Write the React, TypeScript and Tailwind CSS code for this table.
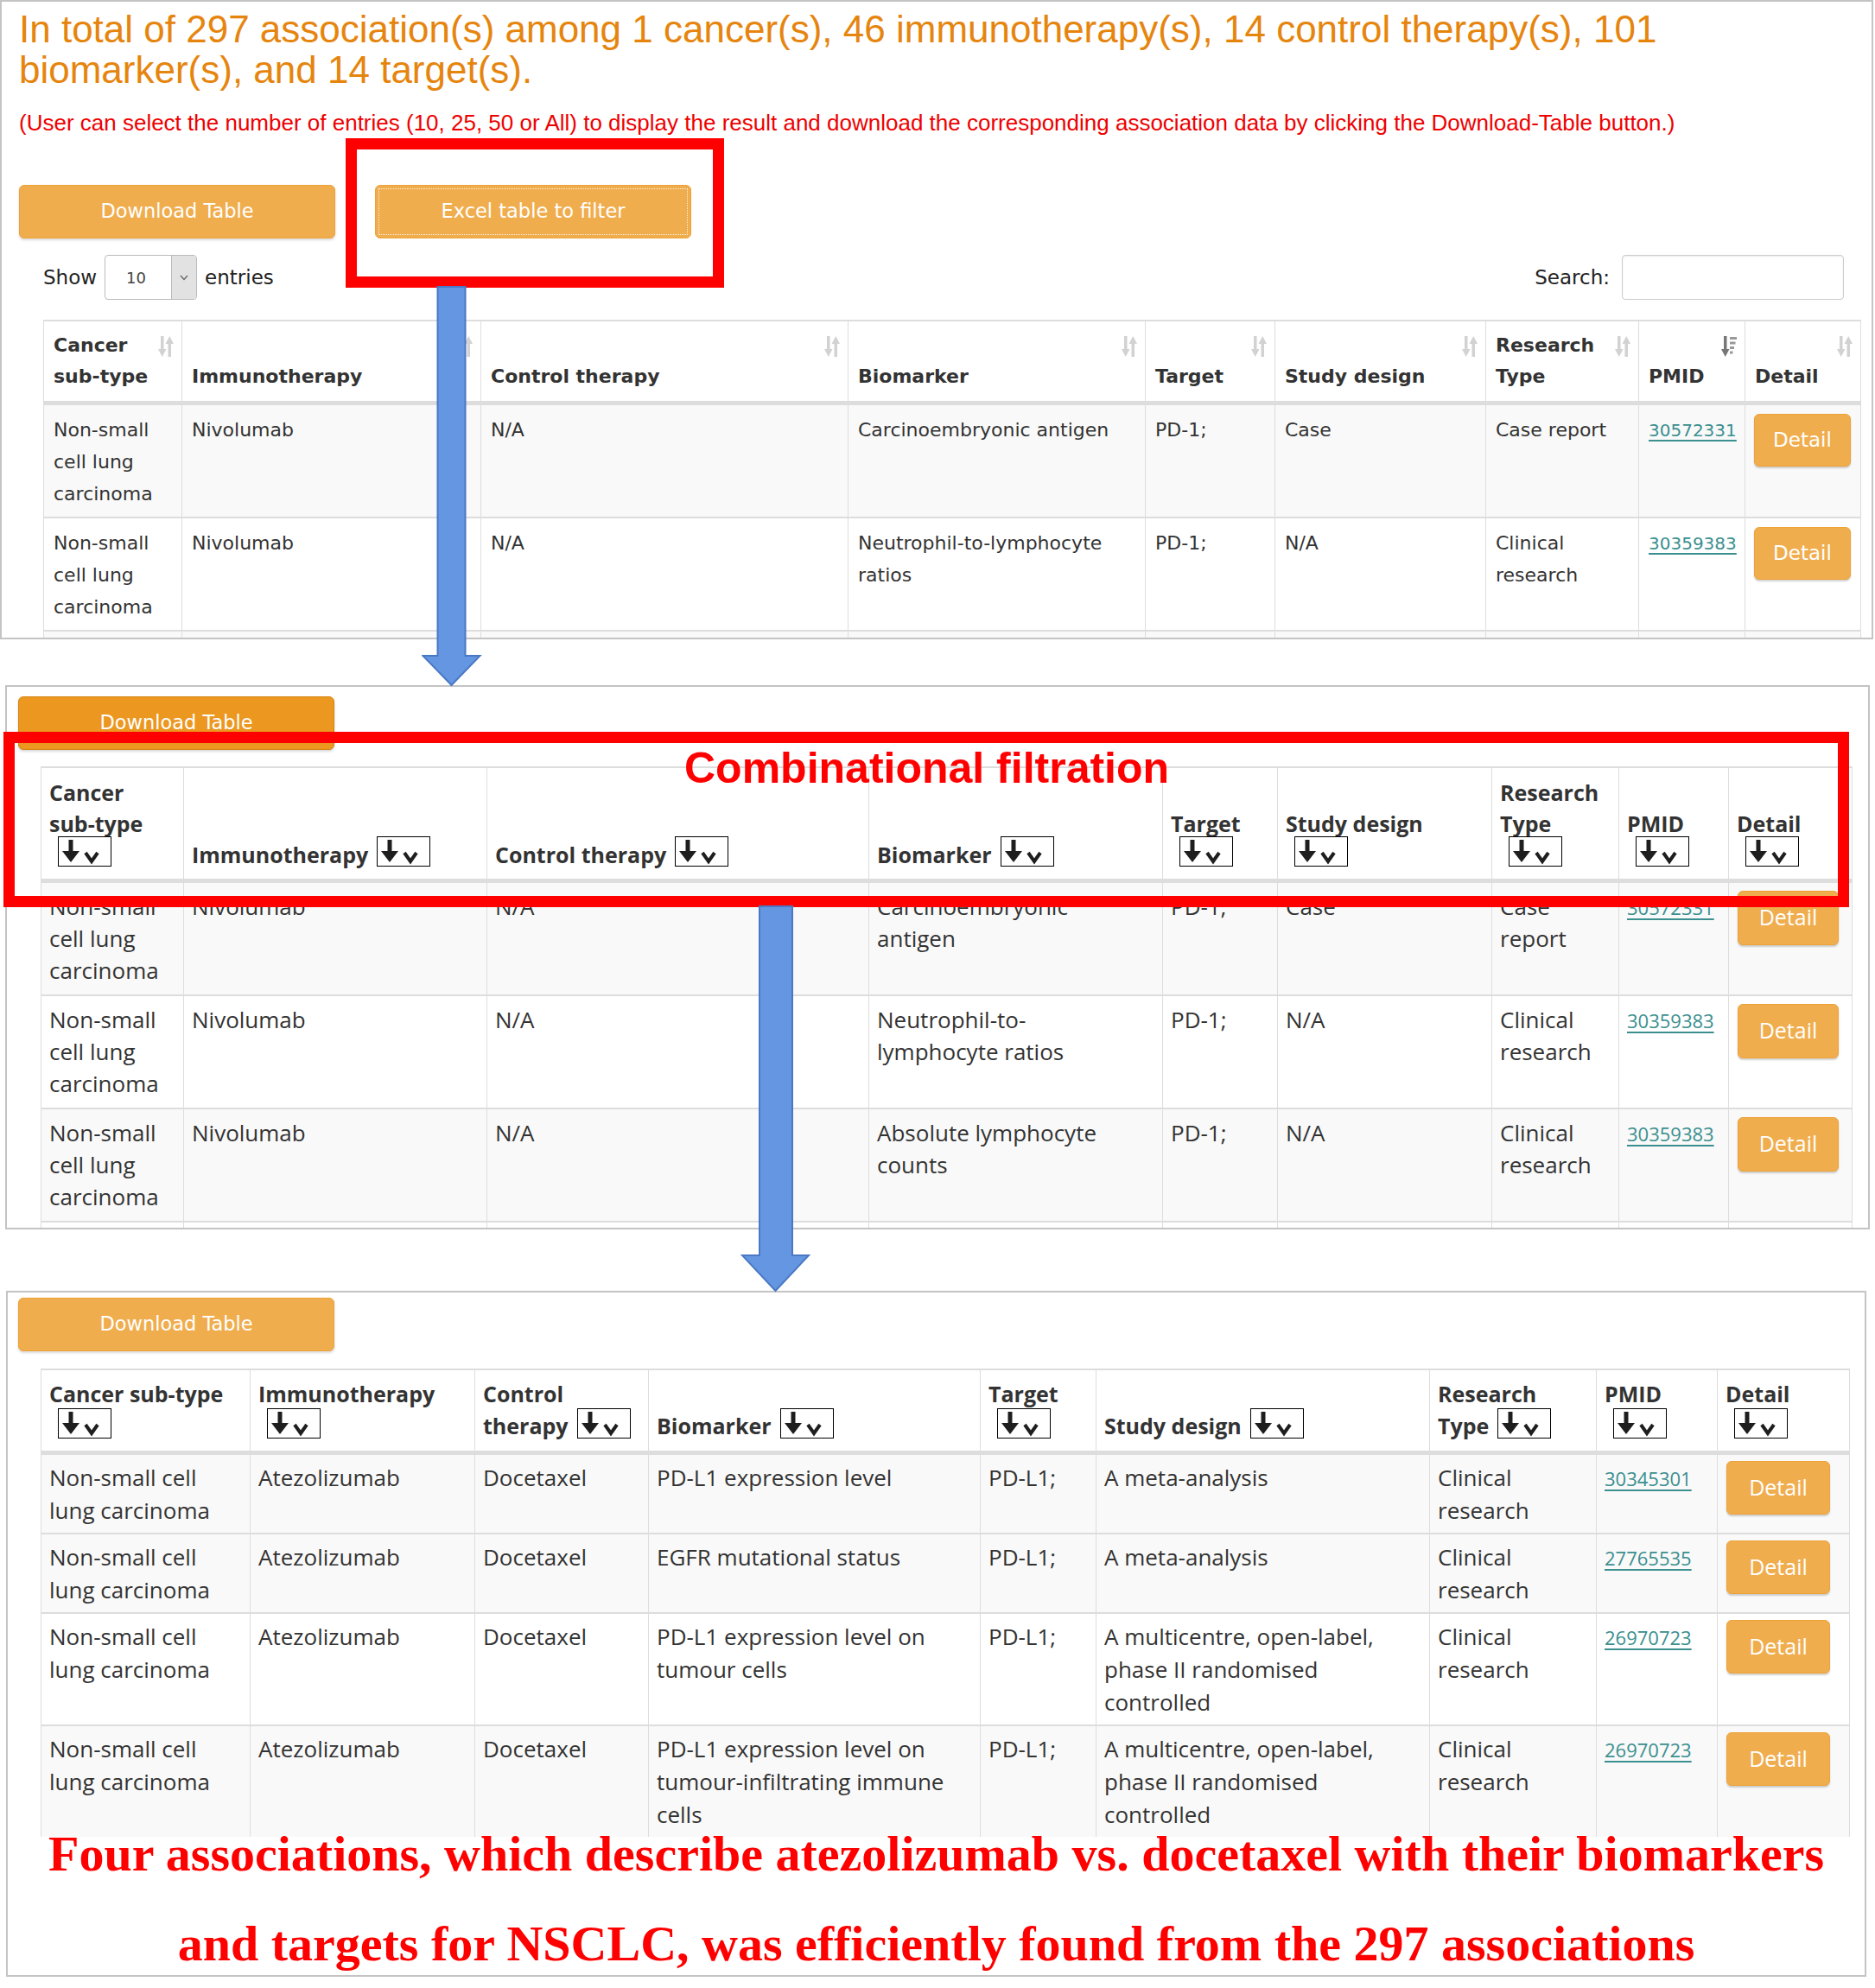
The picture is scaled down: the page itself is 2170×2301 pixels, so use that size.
import React from "react";

type Row = { cells: string[]; pmid: string; striped: boolean };
type HLine = [string, boolean];

const NSCLC3 = "Non-small\ncell lung\ncarcinoma";
const NSCLC2 = "Non-small cell\nlung carcinoma";

const rows1: Row[] = [
  { cells: [NSCLC3, "Nivolumab", "N/A", "Carcinoembryonic antigen", "PD-1;", "Case", "Case report"], pmid: "30572331", striped: true },
  { cells: [NSCLC3, "Nivolumab", "N/A", "Neutrophil-to-lymphocyte\nratios", "PD-1;", "N/A", "Clinical\nresearch"], pmid: "30359383", striped: false },
  { cells: [NSCLC3, "Nivolumab", "N/A", "Absolute lymphocyte counts", "PD-1;", "N/A", "Clinical\nresearch"], pmid: "30359383", striped: true },
];

const rows2: Row[] = [
  { cells: [NSCLC3, "Nivolumab", "N/A", "Carcinoembryonic\nantigen", "PD-1;", "Case", "Case\nreport"], pmid: "30572331", striped: true },
  { cells: [NSCLC3, "Nivolumab", "N/A", "Neutrophil-to-\nlymphocyte ratios", "PD-1;", "N/A", "Clinical\nresearch"], pmid: "30359383", striped: false },
  { cells: [NSCLC3, "Nivolumab", "N/A", "Absolute lymphocyte\ncounts", "PD-1;", "N/A", "Clinical\nresearch"], pmid: "30359383", striped: true },
  { cells: [NSCLC3, "Nivolumab", "N/A", "Interleukin-8", "PD-1;", "N/A", "Clinical\nresearch"], pmid: "30359383", striped: false },
];

const rows3: Row[] = [
  { cells: [NSCLC2, "Atezolizumab", "Docetaxel", "PD-L1 expression level", "PD-L1;", "A meta-analysis", "Clinical\nresearch"], pmid: "30345301", striped: true },
  { cells: [NSCLC2, "Atezolizumab", "Docetaxel", "EGFR mutational status", "PD-L1;", "A meta-analysis", "Clinical\nresearch"], pmid: "27765535", striped: true },
  { cells: [NSCLC2, "Atezolizumab", "Docetaxel", "PD-L1 expression level on\ntumour cells", "PD-L1;", "A multicentre, open-label,\nphase II randomised\ncontrolled", "Clinical\nresearch"], pmid: "26970723", striped: false },
  { cells: [NSCLC2, "Atezolizumab", "Docetaxel", "PD-L1 expression level on\ntumour-infiltrating immune\ncells", "PD-L1;", "A multicentre, open-label,\nphase II randomised\ncontrolled", "Clinical\nresearch"], pmid: "26970723", striped: true },
];

const heads1 = ["Cancer\nsub-type", "Immunotherapy", "Control therapy", "Biomarker", "Target", "Study design", "Research\nType", "PMID", "Detail"];

const heads2: HLine[][] = [
  [["Cancer", false], ["sub-type", false], ["", true]],
  [["Immunotherapy", true]],
  [["Control therapy", true]],
  [["Biomarker", true]],
  [["Target", false], ["", true]],
  [["Study design", false], ["", true]],
  [["Research", false], ["Type", false], ["", true]],
  [["PMID", false], ["", true]],
  [["Detail", false], ["", true]],
];

const heads3: HLine[][] = [
  [["Cancer sub-type", false], ["", true]],
  [["Immunotherapy", false], ["", true]],
  [["Control", false], ["therapy", true]],
  [["Biomarker", true]],
  [["Target", false], ["", true]],
  [["Study design", true]],
  [["Research", false], ["Type", true]],
  [["PMID", false], ["", true]],
  [["Detail", false], ["", true]],
];

const cols1 = ["w-[160px]", "w-[346px]", "w-[425px]", "w-[344px]", "w-[150px]", "w-[244px]", "w-[177px]", "w-[123px]", "w-[134px]"];
const cols2 = ["w-[165px]", "w-[351px]", "w-[442px]", "w-[340px]", "w-[133px]", "w-[248px]", "w-[147px]", "w-[127px]", "w-[143px]"];
const cols3 = ["w-[242px]", "w-[260px]", "w-[201px]", "w-[384px]", "w-[134px]", "w-[386px]", "w-[193px]", "w-[140px]", "w-[153px]"];

const SortIcon = ({ active }: { active?: boolean }) =>
  active ? (
    <svg width="18" height="26" viewBox="0 0 18 26">
      <rect x="3" y="1" width="3.5" height="17" fill="#777" />
      <polygon points="0,16 9.5,16 4.75,25" fill="#777" />
      <rect x="10" y="2" width="8" height="3" fill="#999" />
      <rect x="10" y="7.5" width="6.5" height="3" fill="#999" />
      <rect x="10" y="13" width="5" height="3" fill="#999" />
      <rect x="10" y="18.5" width="3.5" height="3" fill="#999" />
    </svg>
  ) : (
    <svg width="18" height="26" viewBox="0 0 18 26">
      <rect x="3" y="1" width="3.5" height="17" fill="#d2d2d2" />
      <polygon points="0,16 9.5,16 4.75,25" fill="#d2d2d2" />
      <rect x="11.5" y="8" width="3.5" height="17" fill="#d2d2d2" />
      <polygon points="8.5,10 18,10 13.25,1" fill="#d2d2d2" />
    </svg>
  );

const FilterBox = () => (
  <span className="inline-flex h-[35px] w-[62px] shrink-0 items-center justify-center border-[1.5px] border-black bg-white">
    <svg width="56" height="31" viewBox="0 0 56 31">
      <rect x="9.5" y="2" width="5" height="16" fill="#1e1e1e" />
      <polygon points="2,15 22,15 12,28" fill="#1e1e1e" />
      <polyline points="29,17 36,27 43,17" fill="none" stroke="#1e1e1e" strokeWidth="4" />
    </svg>
  </span>
);

const DetailBtn = ({ cls }: { cls: string }) => (
  <div className={`flex items-center justify-center rounded-[6px] border border-[#eea236] bg-[#f0ad4e] text-white shadow-[0_2px_2px_rgba(0,0,0,0.18)] ${cls}`}>
    Detail
  </div>
);

const Panel1Table = () => (
  <table className="w-[2103px] table-fixed border-collapse font-['DejaVu_Sans',sans-serif] text-[22px] text-[#333]">
    <colgroup>
      {cols1.map((c, i) => (
        <col key={i} className={c} />
      ))}
    </colgroup>
    <thead>
      <tr>
        {heads1.map((h, i) => (
          <th
            key={i}
            className="relative h-[95px] whitespace-pre border border-t-2 border-b-[5px] border-[#ddd] pb-[10px] pl-[11px] pr-[28px] text-left align-bottom font-bold leading-[36px]"
          >
            {h}
            <span className="absolute right-[9px] top-[16px]">
              <SortIcon active={i === 7} />
            </span>
          </th>
        ))}
      </tr>
    </thead>
    <tbody>
      {rows1.map((r, ri) => (
        <tr key={ri} className={r.striped ? "bg-[#f9f9f9]" : "bg-white"}>
          {r.cells.map((c, ci) => (
            <td key={ci} className="whitespace-pre border-x border-t-2 border-[#ddd] px-[11px] pb-[8px] pt-[10px] align-top leading-[37px]">
              {c}
            </td>
          ))}
          <td className="border-x border-t-2 border-[#ddd] px-[11px] pt-[10px] align-top leading-[37px]">
            <span className="text-[20px] text-[#3b8f8f] underline underline-offset-[4px]">{r.pmid}</span>
          </td>
          <td className="border-x border-t-2 border-[#ddd] px-[10px] pt-[10px] align-top">
            <DetailBtn cls="h-[61px] w-[112px] text-[23px]" />
          </td>
        </tr>
      ))}
    </tbody>
  </table>
);

const FilterTable = ({
  cols,
  heads,
  rows,
  headH,
  lineH,
  lead,
  width,
  pad,
  btn,
}: {
  cols: string[];
  heads: HLine[][];
  rows: Row[];
  headH: string;
  lineH: string;
  lead: string;
  width: string;
  pad: string;
  btn: string;
}) => (
  <table className={`table-fixed border-collapse font-['Open_Sans',sans-serif] text-[26px] text-[#333] ${width}`}>
    <colgroup>
      {cols.map((c, i) => (
        <col key={i} className={c} />
      ))}
    </colgroup>
    <thead>
      <tr>
        {heads.map((h, i) => (
          <th key={i} className={`border border-t-2 border-b-[5px] border-[#ddd] px-[9px] pb-[9px] text-left align-bottom text-[25px] font-bold ${headH}`}>
            {h.map(([t, box], li) => (
              <div key={li} className={`flex items-center gap-[10px] whitespace-pre ${lineH}`}>
                {t ? <span>{t}</span> : null}
                {box ? <span className={t ? "" : "ml-[10px]"}><FilterBox /></span> : null}
              </div>
            ))}
          </th>
        ))}
      </tr>
    </thead>
    <tbody>
      {rows.map((r, ri) => (
        <tr key={ri} className={r.striped ? "bg-[#f9f9f9]" : "bg-white"}>
          {r.cells.map((c, ci) => (
            <td key={ci} className={`whitespace-pre border-x border-t-2 border-[#ddd] px-[9px] align-top ${pad} ${lead}`}>
              {c}
            </td>
          ))}
          <td className={`border-x border-t-2 border-[#ddd] px-[9px] align-top ${pad} ${lead}`}>
            <span className="text-[22px] text-[#3b8f8f] underline underline-offset-[4px]">{r.pmid}</span>
          </td>
          <td className={`border-x border-t-2 border-[#ddd] px-[10px] align-top ${pad}`}>
            <DetailBtn cls={btn} />
          </td>
        </tr>
      ))}
    </tbody>
  </table>
);

const DownloadBtn = ({ dark }: { dark?: boolean }) => (
  <div
    className={`flex h-[62px] w-[366px] items-center justify-center rounded-[6px] border font-['DejaVu_Sans',sans-serif] text-[22.5px] text-white shadow-[0_2px_3px_rgba(0,0,0,0.15)] ${
      dark ? "border-[#d58512] bg-[#ec971f]" : "border-[#eea236] bg-[#f0ad4e]"
    }`}
  >
    Download Table
  </div>
);

export default function App() {
  return (
    <div className="relative h-[2301px] w-[2170px] overflow-hidden bg-white">
      {/* panel 1: result summary */}
      <div className="h-[740px] w-[2168px] overflow-hidden border-2 border-[#c4c4c4] bg-white pt-[8px]">
        <div className="pl-[20px] font-['Liberation_Sans',Arial,sans-serif] text-[44px] leading-[47px] text-[#e6850e]">
          In total of 297 association(s) among 1 cancer(s), 46 immunotherapy(s), 14 control therapy(s), 101
          <br />
          biomarker(s), and 14 target(s).
        </div>
        <div className="mt-[23px] pl-[20px] font-['Liberation_Sans',Arial,sans-serif] text-[26px] leading-[30px] text-[#ee0000]">
          (User can select the number of entries (10, 25, 50 or All) to display the result and download the corresponding association data by clicking the Download-Table button.)
        </div>
        <div className="mt-[57px] flex gap-[46px] pl-[20px]">
          <DownloadBtn />
          <div className="flex h-[62px] w-[366px] items-center justify-center rounded-[6px] border border-[#eea236] bg-[#f0ad4e] p-[3px] font-['DejaVu_Sans',sans-serif] text-[22.5px] text-white">
            <div className="flex h-full w-full items-center justify-center border border-dotted border-white/80">Excel table to filter</div>
          </div>
        </div>
        <div className="mt-[19px] flex h-[52px] items-center justify-between pl-[48px] pr-[32px] font-['DejaVu_Sans',sans-serif] text-[23px] text-[#222]">
          <div className="flex items-center gap-[9px]">
            <span>Show</span>
            <div className="flex h-[52px] w-[107px] overflow-hidden rounded-[4px] border border-[#bbb] bg-white">
              <div className="flex flex-1 items-center pl-[24px] text-[18px] text-[#444]">10</div>
              <div className="flex w-[29px] items-center justify-center border-l border-[#bbb] bg-[#e2e2e2]">
                <svg width="10" height="7" viewBox="0 0 10 7">
                  <polyline points="1,1 5,5.5 9,1" fill="none" stroke="#666" strokeWidth="1.3" />
                </svg>
              </div>
            </div>
            <span>entries</span>
          </div>
          <div className="flex items-center gap-[14px]">
            <span>Search:</span>
            <div className="h-[52px] w-[257px] rounded-[4px] border border-[#ccc] bg-white shadow-[inset_0_1px_2px_rgba(0,0,0,0.08)]" />
          </div>
        </div>
        <div className="mt-[23px] pl-[48px]">
          <Panel1Table />
        </div>
      </div>

      {/* panel 2: combinational filtration */}
      <div className="ml-[6px] mt-[53px] h-[630px] w-[2158px] overflow-hidden border-2 border-[#c4c4c4] bg-white pl-[39px] pt-[11px]">
        <div className="-ml-[26px]">
          <DownloadBtn dark />
        </div>
        <div className="mt-[19px]">
          <FilterTable
            cols={cols2}
            heads={heads2}
            rows={rows2}
            headH="h-[131px]"
            lineH="h-[36px]"
            lead="leading-[37px]"
            width="w-[2096px]"
            pad="pt-[9px] pb-[9px]"
            btn="h-[63px] w-[117px] text-[25px] font-['Open_Sans',sans-serif]"
          />
        </div>
      </div>

      {/* panel 3: filtered result */}
      <div className="ml-[7px] mt-[71px] h-[794px] w-[2153px] overflow-hidden border-2 border-[#c4c4c4] bg-white pl-[38px] pt-[6px]">
        <div className="-ml-[26px]">
          <DownloadBtn />
        </div>
        <div className="mt-[20px]">
          <FilterTable
            cols={cols3}
            heads={heads3}
            rows={rows3}
            headH="h-[96px]"
            lineH="h-[37px]"
            lead="leading-[38px]"
            width="w-[2093px]"
            pad="pt-[7px] pb-[7px]"
            btn="h-[62px] w-[120px] text-[25px]"
          />
        </div>
        <div className="relative -ml-[38px] -mt-[32px] text-center font-['Liberation_Serif','Times_New_Roman',serif] text-[58px] font-bold leading-[104px] text-[#ff0000]">
          Four associations, which describe atezolizumab vs. docetaxel with their biomarkers
          <br />
          and targets for NSCLC, was efficiently found from the 297 associations
        </div>
      </div>

      {/* annotations */}
      <div className="pointer-events-none absolute left-[400px] top-[160px] h-[173px] w-[438px] border-[13px] border-[#ff0000]" />
      <svg className="pointer-events-none absolute left-[488px] top-[331px]" width="70" height="464" viewBox="0 0 70 464">
        <path d="M18.5 1 H50.5 V428 H67.5 L34.5 462 L1.5 428 H18.5 Z" fill="#6496e1" stroke="#4a78c4" strokeWidth="2" />
      </svg>
      <div className="pointer-events-none absolute left-[4px] top-[847px] h-[203px] w-[2136px] border-[13px] border-[#ff0000]" />
      <div className="pointer-events-none absolute left-[792px] top-[864px] font-['Liberation_Sans',Arial,sans-serif] text-[50px] font-bold leading-[50px] text-[#ff0000]">
        Combinational filtration
      </div>
      <svg className="pointer-events-none absolute left-[857px] top-[1048px]" width="81" height="448" viewBox="0 0 81 448">
        <path d="M22 1 H60 V405 H79 L40.5 446 L2 405 H22 Z" fill="#6496e1" stroke="#4a78c4" strokeWidth="2" />
      </svg>
    </div>
  );
}
